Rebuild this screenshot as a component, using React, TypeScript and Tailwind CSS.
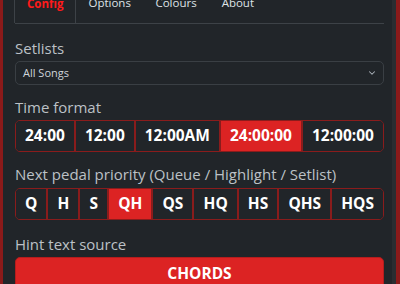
import { ChevronDown } from "lucide-react";

const timeFormats = ["24:00", "12:00", "12:00AM", "24:00:00", "12:00:00"];
const priorities = ["Q", "H", "S", "QH", "QS", "HQ", "HS", "QHS", "HQS"];

function ButtonGroup({ items, active }: { items: string[]; active: string }) {
  return (
    <div className="flex h-[32px] rounded-[5px] border border-[#8a1c1c] overflow-hidden">
      {items.map((item, i) => (
        <button
          key={item}
          className={`flex-auto px-[8px] text-[15.5px] font-bold text-white ${i > 0 ? "border-l-2 border-[#8a1c1c]" : ""} ${item === active ? "bg-[#dc2323]" : "bg-[#212529]"}`}
        >
          {item}
        </button>
      ))}
    </div>
  );
}

export default function App() {
  return (
    <div className="h-[284px] w-[400px] overflow-hidden flex bg-[#8b1a1a] font-['Open_Sans',sans-serif]">
      <div className="ml-[3px] flex-1 flex bg-[#212529]">
        <div className="flex-1 pl-[12px] pr-[8px]">
          {/* Tabs */}
          <div className="-mt-[17px] flex border-b border-[#3d4247] text-[11.5px]">
            <div className="-ml-px h-[40px] px-[12px] flex items-center border border-b-0 border-[#3d4247] rounded-t-[5px] bg-[#212529] -mb-px font-bold text-[#ff1a1a]">
              Config
            </div>
            <div className="h-[40px] px-[12px] flex items-center text-[#dee2e6]">Options</div>
            <div className="h-[40px] px-[12.5px] flex items-center text-[#dee2e6]">Colours</div>
            <div className="h-[40px] px-[12.5px] flex items-center text-[#dee2e6]">About</div>
          </div>

          <div className="mt-[12px] h-[24px] leading-[24px] text-[15px] text-[#bcc1c6]">Setlists</div>
          <div className="mt-[1px] h-[24px] flex items-center justify-between rounded-[5px] border border-[#3a3f44] pl-[7px] pr-[6px] text-[11px] text-[#ced4da]">
            <span>All Songs</span>
            <ChevronDown className="w-[10px] h-[10px] text-[#adb5bd]" strokeWidth={2.5} />
          </div>

          <div className="mt-[10px] h-[24px] leading-[24px] text-[15px] text-[#bcc1c6]">Time format</div>
          <div className="mt-[1px]">
            <ButtonGroup items={timeFormats} active="24:00:00" />
          </div>

          <div className="mt-[10px] h-[24px] leading-[24px] text-[15px] text-[#bcc1c6]">
            Next pedal priority (Queue / Highlight / Setlist)
          </div>
          <div className="mt-[2px]">
            <ButtonGroup items={priorities} active="QH" />
          </div>

          <div className="mt-[12px] h-[24px] leading-[24px] text-[15px] text-[#bcc1c6]">Hint text source</div>
          <button className="mt-[1px] w-full h-[34px] rounded-[5px] border border-[#b51d1d] bg-[#dc2323] text-[15.5px] font-bold text-white">
            CHORDS
          </button>
        </div>
        <div className="w-[4px] bg-[#2a2d31]" />
      </div>
      <div className="w-[4px]" />
    </div>
  );
}
